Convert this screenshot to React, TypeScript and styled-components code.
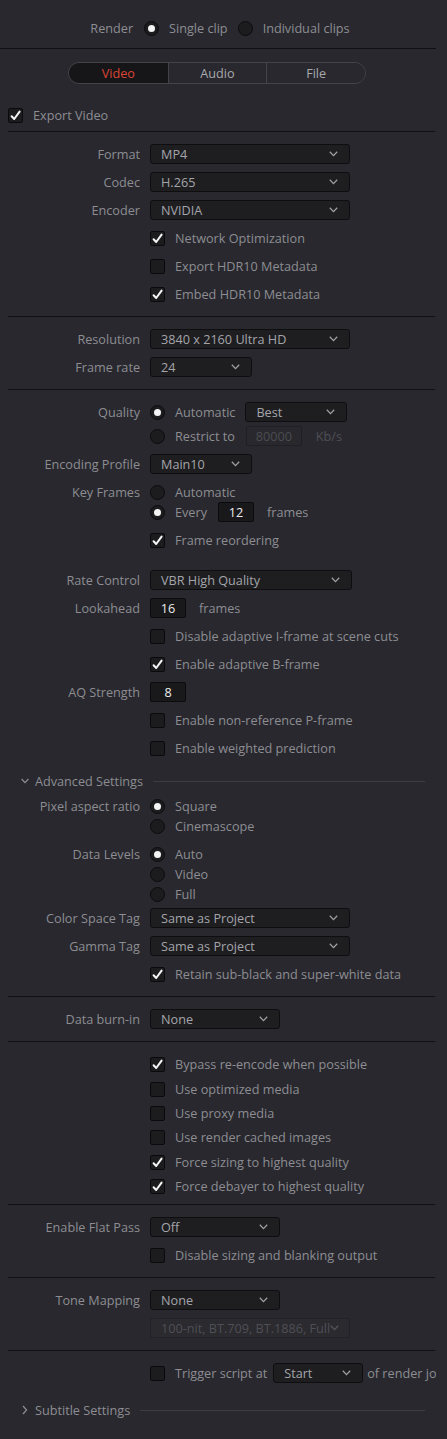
import React from "react";
import styled, { createGlobalStyle } from "styled-components";

const GlobalStyle = createGlobalStyle`
  html, body { margin: 0; padding: 0; background: #28282e; }
  * { box-sizing: border-box; }
`;

const Page = styled.div`
  width: 447px;
  min-height: 1439px;
  background: #28282e;
  font-family: "Open Sans", "Noto Sans", sans-serif;
  font-size: 12.67px;
  color: #8d8d92;
`;

const Panel = styled.div`
  width: 436px;
  overflow: hidden;
`;

const TopBar = styled.div`
  height: 49px;
  padding-top: 8px;
  border-bottom: 1px solid #111113;
  display: flex;
  align-items: center;
  justify-content: center;
  padding-left: 4px;
`;

const TopGroup = styled.div`
  display: flex;
  align-items: center;
  height: 40px;
  gap: 10px;
`;

const TopLabel = styled.span<{ $gap?: number }>`
  margin-right: ${(p) => p.$gap ?? 0}px;
`;

const TabsRow = styled.div`
  display: flex;
  justify-content: center;
  margin-top: 13px;
  padding-right: 2px;
`;

const Tabs = styled.div`
  width: 298px;
  height: 22px;
  border: 1px solid #434348;
  border-radius: 11px;
  overflow: hidden;
  display: grid;
  grid-template-columns: 1fr 1fr 1fr;
`;

const Tab = styled.div<{ $active?: boolean }>`
  display: flex;
  align-items: center;
  justify-content: center;
  background: ${(p) => (p.$active ? "#161618" : "#28282e")};
  color: ${(p) => (p.$active ? "#dc4534" : "#a9a9ad")};
  & + & {
    border-left: 1px solid #434348;
  }
`;

const ExportRow = styled.div`
  display: flex;
  align-items: center;
  gap: 10px;
  height: 20px;
  margin-top: 21px;
  margin-bottom: 6px;
  padding-left: 8px;
`;

const Divider = styled.div`
  height: 1px;
  background: #111113;
  margin-left: 8px;
  width: 427px;
`;

const Section = styled.div<{ $pt?: number; $pb?: number }>`
  padding-top: ${(p) => p.$pt ?? 12}px;
  padding-bottom: ${(p) => p.$pb ?? 12}px;
`;

const Row = styled.div<{ $mt?: number }>`
  display: flex;
  align-items: center;
  height: 20px;
  margin-top: ${(p) => p.$mt ?? 8}px;
  white-space: nowrap;
  &:first-child {
    margin-top: 0;
  }
`;

const Label = styled.div`
  width: 150px;
  flex-shrink: 0;
  text-align: right;
  padding-right: 10px;
`;

const Controls = styled.div`
  display: flex;
  align-items: center;
  flex-shrink: 0;
`;

const Text = styled.span<{ $ml?: number; $dim?: boolean }>`
  margin-left: ${(p) => p.$ml ?? 0}px;
  color: ${(p) => (p.$dim ? "#4f4f55" : "inherit")};
  flex-shrink: 0;
`;

const DropBox = styled.div<{ $w: number; $disabled?: boolean; $ml?: number }>`
  width: ${(p) => p.$w}px;
  height: 20px;
  margin-left: ${(p) => p.$ml ?? 0}px;
  flex-shrink: 0;
  display: flex;
  align-items: center;
  justify-content: space-between;
  padding: 0 11px 0 10px;
  border-radius: 3px;
  background: ${(p) => (p.$disabled ? "#2a2a2f" : "#1e1e20")};
  border: 1px solid ${(p) => (p.$disabled ? "#222226" : "#0e0e10")};
  color: ${(p) => (p.$disabled ? "#4f4f55" : "#a4a5ab")};
  overflow: hidden;
`;

const Chevron = ({ color = "#a0a0a4" }: { color?: string }) => (
  <svg width="9" height="6" viewBox="0 0 9 6" style={{ flexShrink: 0 }}>
    <polyline points="0.8,0.8 4.5,4.6 8.2,0.8" fill="none" stroke={color} strokeWidth="1.3" />
  </svg>
);

const Dropdown = ({ w, value, disabled, ml }: { w: number; value: string; disabled?: boolean; ml?: number }) => (
  <DropBox $w={w} $disabled={disabled} $ml={ml}>
    <span>{value}</span>
    <Chevron color={disabled ? "#55555b" : "#a0a0a4"} />
  </DropBox>
);

const NumBox = styled.div<{ $w: number; $disabled?: boolean; $ml?: number }>`
  width: ${(p) => p.$w}px;
  height: 20px;
  margin-left: ${(p) => p.$ml ?? 0}px;
  flex-shrink: 0;
  display: flex;
  align-items: center;
  justify-content: center;
  border-radius: 2px;
  background: ${(p) => (p.$disabled ? "#28282d" : "#19191b")};
  border: 1px solid ${(p) => (p.$disabled ? "#202024" : "#0b0b0d")};
  color: ${(p) => (p.$disabled ? "#4c4c52" : "#ececec")};
`;

const RadioCircle = styled.div<{ $on?: boolean }>`
  width: 15px;
  height: 15px;
  border-radius: 50%;
  flex-shrink: 0;
  background: #1c1c1e;
  border: 1px solid #0c0c0e;
  display: flex;
  align-items: center;
  justify-content: center;
  &::after {
    content: "";
    display: ${(p) => (p.$on ? "block" : "none")};
    width: 7px;
    height: 7px;
    border-radius: 50%;
    background: #f4f4f4;
  }
`;

const CheckBox = styled.div`
  width: 15px;
  height: 15px;
  border-radius: 2px;
  flex-shrink: 0;
  background: #1c1c1e;
  border: 1px solid #0a0a0c;
  display: flex;
  align-items: center;
  justify-content: center;
`;

const Check = ({ on }: { on?: boolean }) => (
  <CheckBox>
    {on && (
      <svg width="11" height="11" viewBox="0 0 11 11">
        <path d="M1.6 6.2 L4.2 9 L9.6 1.6" fill="none" stroke="#f6f6f6" strokeWidth="2" strokeLinecap="round" strokeLinejoin="round" />
      </svg>
    )}
  </CheckBox>
);

const Option = ({ kind, on, text }: { kind: "radio" | "check"; on?: boolean; text: string }) => (
  <Controls>
    {kind === "radio" ? <RadioCircle $on={on} /> : <Check on={on} />}
    <Text $ml={10}>{text}</Text>
  </Controls>
);

const Fold = styled.div<{ $mt: number }>`
  display: flex;
  align-items: center;
  height: 20px;
  margin-top: ${(p) => p.$mt}px;
  padding-left: 21px;
  padding-right: 11px;
  color: #8d8d92;
`;

const FoldText = styled.span`
  margin-left: 6px;
  margin-right: 10px;
  white-space: nowrap;
`;

const FoldLine = styled.div`
  flex: 1;
  height: 1px;
  background: #3c3c42;
`;

const ChevronDown = () => (
  <svg width="8" height="6" viewBox="0 0 8 6">
    <polyline points="0.6,1 4,4.6 7.4,1" fill="none" stroke="#8d8d92" strokeWidth="1.2" />
  </svg>
);

const ChevronRight = () => (
  <svg width="8" height="10" viewBox="0 0 8 10">
    <polyline points="2,1 5.6,5 2,9" fill="none" stroke="#8d8d92" strokeWidth="1.2" />
  </svg>
);

export default function App() {
  return (
    <Page>
      <GlobalStyle />
      <Panel>
        <TopBar>
          <TopGroup>
            <TopLabel $gap={1}>Render</TopLabel>
            <RadioCircle $on />
            <span>Single clip</span>
            <RadioCircle />
            <span>Individual clips</span>
          </TopGroup>
        </TopBar>

        <TabsRow>
          <Tabs>
            <Tab $active>Video</Tab>
            <Tab>Audio</Tab>
            <Tab>File</Tab>
          </Tabs>
        </TabsRow>

        <ExportRow>
          <Check on />
          <Text>Export Video</Text>
        </ExportRow>
        <Divider />

        <Section>
          <Row><Label>Format</Label><Dropdown w={200} value="MP4" /></Row>
          <Row><Label>Codec</Label><Dropdown w={200} value="H.265" /></Row>
          <Row><Label>Encoder</Label><Dropdown w={200} value="NVIDIA" /></Row>
          <Row><Label /><Option kind="check" on text="Network Optimization" /></Row>
          <Row><Label /><Option kind="check" text="Export HDR10 Metadata" /></Row>
          <Row><Label /><Option kind="check" on text="Embed HDR10 Metadata" /></Row>
        </Section>
        <Divider />

        <Section>
          <Row><Label>Resolution</Label><Dropdown w={200} value="3840 x 2160 Ultra HD" /></Row>
          <Row><Label>Frame rate</Label><Dropdown w={102} value="24" /></Row>
        </Section>
        <Divider />

        <Section>
          <Row>
            <Label>Quality</Label>
            <Option kind="radio" on text="Automatic" />
            <Dropdown w={102} value="Best" ml={10} />
          </Row>
          <Row $mt={4}>
            <Label />
            <Option kind="radio" text="Restrict to" />
            <NumBox $w={56} $disabled $ml={11}>80000</NumBox>
            <Text $ml={14} $dim>Kb/s</Text>
          </Row>
          <Row><Label>Encoding Profile</Label><Dropdown w={102} value="Main10" /></Row>
          <Row><Label>Key Frames</Label><Option kind="radio" text="Automatic" /></Row>
          <Row $mt={0}>
            <Label />
            <Option kind="radio" on text="Every" />
            <NumBox $w={36} $ml={11}>12</NumBox>
            <Text $ml={13}>frames</Text>
          </Row>
          <Row><Label /><Option kind="check" on text="Frame reordering" /></Row>
          <Row $mt={20}><Label>Rate Control</Label><Dropdown w={202} value="VBR High Quality" /></Row>
          <Row>
            <Label>Lookahead</Label>
            <NumBox $w={36}>16</NumBox>
            <Text $ml={13}>frames</Text>
          </Row>
          <Row><Label /><Option kind="check" text="Disable adaptive I-frame at scene cuts" /></Row>
          <Row><Label /><Option kind="check" on text="Enable adaptive B-frame" /></Row>
          <Row><Label>AQ Strength</Label><NumBox $w={36}>8</NumBox></Row>
          <Row><Label /><Option kind="check" text="Enable non-reference P-frame" /></Row>
          <Row><Label /><Option kind="check" text="Enable weighted prediction" /></Row>
          <Fold $mt={13}>
            <ChevronDown />
            <FoldText>Advanced Settings</FoldText>
            <FoldLine />
          </Fold>
          <Row $mt={5}><Label>Pixel aspect ratio</Label><Option kind="radio" on text="Square" /></Row>
          <Row $mt={0}><Label /><Option kind="radio" text="Cinemascope" /></Row>
          <Row><Label>Data Levels</Label><Option kind="radio" on text="Auto" /></Row>
          <Row $mt={0}><Label /><Option kind="radio" text="Video" /></Row>
          <Row $mt={0}><Label /><Option kind="radio" text="Full" /></Row>
          <Row $mt={4}><Label>Color Space Tag</Label><Dropdown w={200} value="Same as Project" /></Row>
          <Row><Label>Gamma Tag</Label><Dropdown w={200} value="Same as Project" /></Row>
          <Row><Label /><Option kind="check" on text="Retain sub-black and super-white data" /></Row>
        </Section>
        <Divider />

        <Section>
          <Row><Label>Data burn-in</Label><Dropdown w={130} value="None" /></Row>
        </Section>
        <Divider />

        <Section $pb={8}>
          <Row><Label /><Option kind="check" on text="Bypass re-encode when possible" /></Row>
          <Row $mt={5}><Label /><Option kind="check" text="Use optimized media" /></Row>
          <Row $mt={4}><Label /><Option kind="check" text="Use proxy media" /></Row>
          <Row $mt={4}><Label /><Option kind="check" text="Use render cached images" /></Row>
          <Row $mt={5}><Label /><Option kind="check" on text="Force sizing to highest quality" /></Row>
          <Row $mt={4}><Label /><Option kind="check" on text="Force debayer to highest quality" /></Row>
        </Section>
        <Divider />

        <Section>
          <Row><Label>Enable Flat Pass</Label><Dropdown w={130} value="Off" /></Row>
          <Row><Label /><Option kind="check" text="Disable sizing and blanking output" /></Row>
        </Section>
        <Divider />

        <Section>
          <Row><Label>Tone Mapping</Label><Dropdown w={130} value="None" /></Row>
          <Row><Label /><Dropdown w={200} value="100-nit, BT.709, BT.1886, Full" disabled /></Row>
        </Section>
        <Divider />

        <Section $pb={0}>
          <Row>
            <Label />
            <Option kind="check" text="Trigger script at" />
            <Dropdown w={90} value="Start" ml={6} />
            <Text $ml={4}>of render job</Text>
          </Row>
        </Section>
        <Fold $mt={17}>
          <ChevronRight />
          <FoldText>Subtitle Settings</FoldText>
          <FoldLine />
        </Fold>
      </Panel>
    </Page>
  );
}
